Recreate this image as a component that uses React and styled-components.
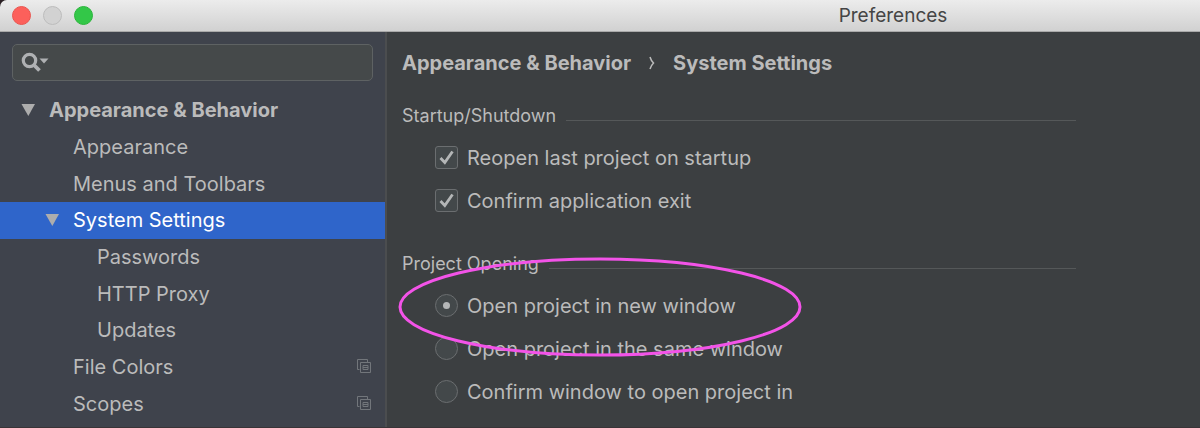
import React from "react";
import styled, { createGlobalStyle } from "styled-components";

const GlobalStyle = createGlobalStyle`
  *, *::before, *::after { box-sizing: border-box; }
  body { margin: 0; background: #2b2024; }
  body, button, input { font-family: Inter, "Liberation Sans", sans-serif; font-size: 20px; }
`;

const Window = styled.div`
  display: flex;
  flex-direction: column;
  min-height: 100vh;
  border-radius: 7px 0 0 0;
  overflow: hidden;
  color: #bbbbbb;
  background: #3c3f41;
  border-bottom: 1px solid #393437;
`;

const TitleBar = styled.header`
  display: flex;
  align-items: center;
  height: 32px;
  padding-left: 12px;
  background: linear-gradient(#ececec, #d1d1d1);
  border-bottom: 1px solid #a9a9a9;
`;

const Lights = styled.div`
  display: flex;
  gap: 12px;
  width: 574px;
`;

const Light = styled.button`
  width: 19px;
  height: 19px;
  padding: 0;
  border-radius: 50%;
  border: 1px solid ${(p) => p.$edge};
  background: ${(p) => p.$fill};
`;

const Title = styled.h1`
  flex: 1;
  margin: 0;
  text-align: center;
  font-size: 19px;
  font-weight: 400;
  line-height: 24px;
  color: #454545;
`;

const Body = styled.div`
  display: flex;
  flex: 1;
`;

const Sidebar = styled.aside`
  flex: 0 0 387px;
  min-width: 0;
  padding-top: 12px;
  background: #3f434c;
  border-right: 2px solid #4b4d4f;
`;

const SearchBox = styled.label`
  display: flex;
  align-items: center;
  height: 37px;
  margin: 0 12px 11px;
  padding: 0 8px;
  border: 1px solid #5e6263;
  border-radius: 5px;
  background: #45494a;
`;

const SearchInput = styled.input`
  flex: 1;
  min-width: 0;
  padding: 0 4px;
  border: 0;
  outline: 0;
  color: inherit;
  background: transparent;
`;

const Tree = styled.ul`
  display: grid;
  grid-auto-rows: 1fr;
  min-height: 330px;
  margin: 0;
  padding: 0;
  list-style: none;
`;

const TreeItem = styled.li`
  display: flex;
`;

const TreeRow = styled.button`
  display: flex;
  flex: 1;
  align-items: center;
  padding: 0 14px 0 ${(p) => 20 + p.$level * 24}px;
  border: 0;
  text-align: left;
  font-weight: ${(p) => (p.$bold ? 700 : 400)};
  color: ${(p) => (p.$selected ? "#ffffff" : "#bbbbbb")};
  background: ${(p) => (p.$selected ? "#2f65ca" : "transparent")};
`;

const ArrowSlot = styled.span`
  display: flex;
  flex: 0 0 29px;
`;

const TreeText = styled.span`
  flex: 1;
  line-height: 24px;
`;

const Content = styled.main`
  position: relative;
  flex: 1;
  padding: 19px 124px 12px 15px;
`;

const Breadcrumb = styled.nav`
  display: flex;
  align-items: center;
  gap: 18px;
  margin-bottom: 29px;
  line-height: 24px;
  font-weight: 700;
`;

const Crumb = styled.a`
  color: inherit;
  text-decoration: none;
`;

const Group = styled.fieldset`
  min-width: 0;
  margin: 0;
  padding: 0;
  border: 0;

  & + & { margin-top: 30px; }
`;

const GroupTitle = styled.legend`
  display: flex;
  align-items: center;
  gap: 10px;
  width: 100%;
  margin-bottom: 8px;
  padding: 0;
  font-size: 18px;
  line-height: 24px;

  &::after {
    content: "";
    flex: 1;
    height: 1px;
    margin-top: 8px;
    background: #555859;
  }
`;

const Option = styled.label`
  display: flex;
  align-items: center;
  gap: 9px;
  height: 43px;
  padding-left: 33px;
  line-height: 24px;
`;

const Mark = styled.input`
  appearance: none;
  display: grid;
  place-content: center;
  flex: none;
  width: 23px;
  height: 23px;
  margin: 0;
  border: 1px solid #6b6e70;
  background: #43484a;
`;

const CheckMark = styled(Mark)`
  border-radius: 3px;
  grid-area: 1 / 1;
`;

const RadioMark = styled(Mark)`
  border-radius: 50%;

  &:checked::before {
    content: "";
    width: 7px;
    height: 7px;
    border-radius: 50%;
    background: #b4b6b7;
  }
`;

const CheckSlot = styled.span`
  display: grid;
  place-items: center;

  svg { grid-area: 1 / 1; pointer-events: none; z-index: 1; }
`;

const Highlight = styled.svg`
  position: absolute;
  left: 11px;
  top: 225px;
  pointer-events: none;
`;

const SearchIcon = () => (
  <svg width="28" height="22" viewBox="0 0 28 22" aria-hidden="true">
    <circle cx="8.500" cy="8.500" r="6.200" fill="none" stroke="#afb1b3" strokeWidth="3.200" />
    <path d="M12.500 12.500l6 6" stroke="#afb1b3" strokeWidth="3.800" />
    <path d="M18.500 6.500h9l-4.500 5z" fill="#afb1b3" />
  </svg>
);

const Arrow = () => (
  <svg width="15" height="14" viewBox="0 0 15 14" aria-hidden="true">
    <path d="M1.500 1h13.500L8.300 13z" fill="#adadad" />
  </svg>
);

const Tick = () => (
  <svg width="23" height="23" viewBox="0 0 23 23" aria-hidden="true">
    <path d="M5.500 12l4.300 4.500 7.700-11" fill="none" stroke="#b4b6b7" strokeWidth="2.800" />
  </svg>
);

const ProjectIcon = () => (
  <svg width="15" height="15" viewBox="0 0 15 15" fill="none" stroke="#72767b" aria-hidden="true">
    <path d="M3.500 10.500h-2v-10h10v2.500M4.500 3.500h10v10h-10zM7 6.500h5v4h-5zM7 8.500h5" />
  </svg>
);

const items = [
  { text: "Appearance & Behavior", level: 0, bold: true, open: true },
  { text: "Appearance", level: 1 },
  { text: "Menus and Toolbars", level: 1 },
  { text: "System Settings", level: 1, open: true, selected: true },
  { text: "Passwords", level: 2 },
  { text: "HTTP Proxy", level: 2 },
  { text: "Updates", level: 2 },
  { text: "File Colors", level: 1, project: true },
  { text: "Scopes", level: 1, project: true },
];

const checks = ["Reopen last project on startup", "Confirm application exit"];
const radios = [
  "Open project in new window",
  "Open project in the same window",
  "Confirm window to open project in",
];

export default function App() {
  return (
    <>
      <GlobalStyle />
      <Window>
        <TitleBar>
          <Lights>
            <Light $fill="#fc605b" $edge="#e9554f" aria-label="Close" />
            <Light $fill="#d2d2d2" $edge="#bcbcbc" aria-label="Minimize" />
            <Light $fill="#33c748" $edge="#2bb53c" aria-label="Zoom" />
          </Lights>
          <Title>Preferences</Title>
        </TitleBar>
        <Body>
          <Sidebar>
            <SearchBox>
              <SearchIcon />
              <SearchInput type="text" aria-label="Search settings" />
            </SearchBox>
            <Tree>
              {items.map((item) => (
                <TreeItem key={item.text}>
                  <TreeRow $level={item.level} $bold={item.bold} $selected={item.selected}>
                    <ArrowSlot>{item.open && <Arrow />}</ArrowSlot>
                    <TreeText>{item.text}</TreeText>
                    {item.project && <ProjectIcon />}
                  </TreeRow>
                </TreeItem>
              ))}
            </Tree>
          </Sidebar>
          <Content>
            <Breadcrumb>
              <Crumb href="#behavior">Appearance &amp; Behavior</Crumb>
              <svg width="6" height="14" viewBox="0 0 6 14" fill="none" stroke="#bbbbbb" strokeWidth="1.500" aria-hidden="true">
                <path d="M1 1q1 3.500 3.500 6Q2 9.500 1 13" />
              </svg>
              <Crumb href="#system">System Settings</Crumb>
            </Breadcrumb>
            <Group>
              <GroupTitle>Startup/Shutdown</GroupTitle>
              {checks.map((text) => (
                <Option key={text}>
                  <CheckSlot>
                    <CheckMark type="checkbox" defaultChecked />
                    <Tick />
                  </CheckSlot>
                  {text}
                </Option>
              ))}
            </Group>
            <Group>
              <GroupTitle>Project Opening</GroupTitle>
              {radios.map((text, i) => (
                <Option key={text}>
                  <RadioMark type="radio" name="opening" defaultChecked={i === 0} />
                  {text}
                </Option>
              ))}
            </Group>
            <Highlight width="404" height="100" viewBox="0 0 404 100" aria-hidden="true">
              <ellipse cx="202" cy="50" rx="200" ry="48" fill="none" stroke="#f353e8" strokeWidth="3" />
            </Highlight>
          </Content>
        </Body>
      </Window>
    </>
  );
}
